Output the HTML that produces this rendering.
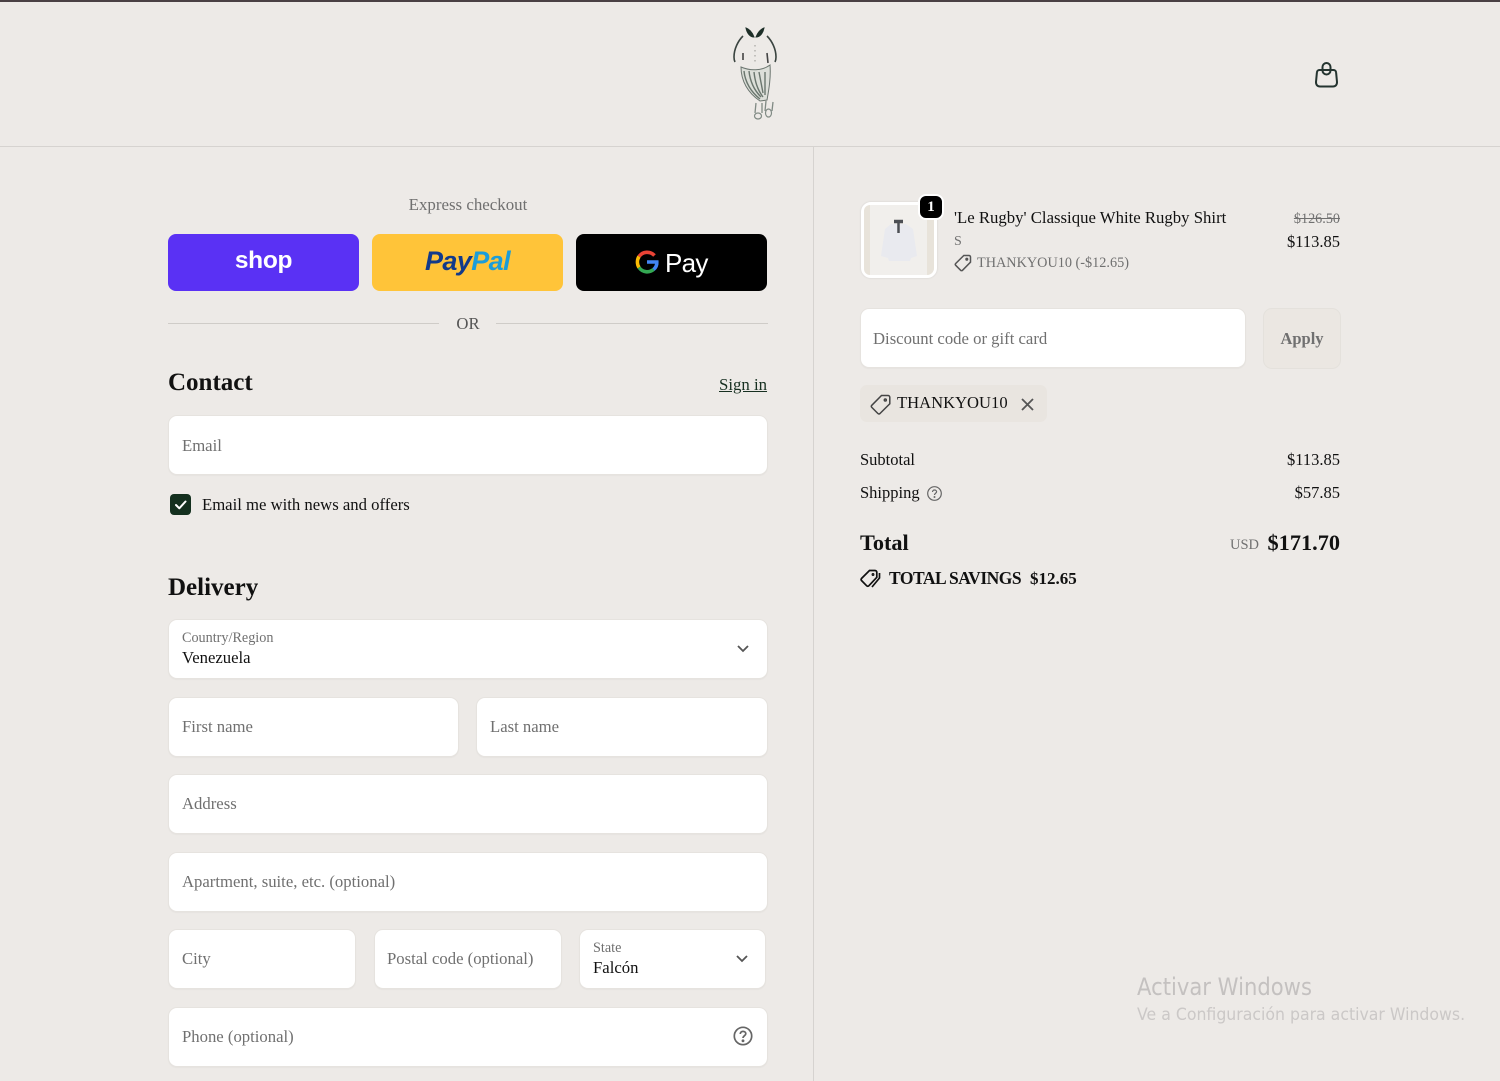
<!DOCTYPE html>
<html><head><meta charset="utf-8"><title>Checkout</title>
<style>
*{box-sizing:border-box}
html,body{margin:0;padding:0;width:1500px;height:1081px;overflow:hidden;background:#edeae7;font-family:"Liberation Serif",serif;color:#111}
.a{position:absolute;white-space:nowrap}
.f{position:absolute;background:#fff;border:1px solid #e6e3df;border-radius:9px;height:60px;box-shadow:0 1px 1px rgba(0,0,0,.03)}
.p{position:absolute;left:13px;top:19px;font-size:16.7px;line-height:20px;color:#707070;white-space:nowrap}
.l{position:absolute;left:13px;top:10px;font-size:14.2px;line-height:17px;color:#707070;white-space:nowrap}
.v{position:absolute;left:13px;top:28px;font-size:16.7px;line-height:20px;color:#111;white-space:nowrap}
.b{position:absolute;top:234px;height:57px;width:191px;border-radius:8px}
svg{position:absolute;overflow:visible}
</style></head><body>
<div class="a" style="left:0;top:0;width:1500px;height:2px;background:#4a4044"></div>
<div class="a" style="left:0;top:146px;width:1500px;height:1px;background:#d6d3d0"></div>
<div class="a" style="left:813px;top:147px;width:1px;height:934px;background:#d6d3d0"></div>

<svg style="left:730px;top:25px" width="50" height="98" viewBox="0 0 50 98" fill="none">
<path d="M16 3C19 4 22 7 24 12C20 12 17 8 16 3ZM34 3C31 4 28 7 26 12C30 12 33 8 34 3Z" fill="#1e2f28" stroke="#1e2f28"/>
<path d="M13 11C8 16 4 24 4 32C4 34 4.500 36 5 37M37 11C42 16 46 24 46 32C46 34 45.500 36 45 37" stroke="#3a4440" stroke-width="1.600"/>
<path d="M13 28L13 35M37 28L38 38" stroke="#444" stroke-width="1.600"/>
<path d="M25 20V40" stroke="#a5a5a0" stroke-width="1.200" stroke-dasharray="1.500 3.500"/>
<path d="M11 42C11 56 18 68 30 76L37 75C39 64 41 52 40 40C32 46 20 46 11 42Z" fill="#dcdfd9" stroke="#6b756f" stroke-width="1"/>
<path d="M14 46C15 57 21 67 30 74M19 46C20 56 24 65 31 72M24 47C25 56 27 64 33 72M29 47L33 68M35 47L35 70" stroke="#6a766e" stroke-width="1.400"/>
<path d="M26 78L25 88M32 78L32 88M36 76L35 86M43 77L42 86" stroke="#808a84" stroke-width="1.300"/>
<ellipse cx="28" cy="91" rx="3.500" ry="3" stroke="#808a84" stroke-width="1.200"/><ellipse cx="38.500" cy="88" rx="3" ry="4" stroke="#808a84" stroke-width="1.200"/>
</svg>

<svg style="left:1314px;top:61px" width="25" height="27" viewBox="0 0 25 27" fill="none" stroke="#243430" stroke-width="2">
<path d="M5.500 9H19.500C21 9 22 10 22.100 11.500L23 21C23.100 23.800 21.500 25.500 19 25.500H6C3.500 25.500 1.900 23.800 2 21L2.900 11.500C3 10 4 9 5.500 9Z"/>
<rect x="8.500" y="2" width="8" height="11.500" rx="4"/>
</svg>

<div class="a" style="left:168px;width:600px;text-align:center;top:195px;font-size:16.9px;line-height:20px;color:#707070">Express checkout</div>
<div class="b" style="left:168px;background:#5a31f4"><div class="a" style="left:0;width:191px;text-align:center;top:10px;font:bold 24.500px/34px 'Liberation Sans',sans-serif;color:#fff;letter-spacing:-.3px">shop</div></div>
<div class="b" style="left:372px;background:#ffc439"><div class="a" style="left:0;width:191px;text-align:center;top:10px;font:italic bold 27px/34px 'Liberation Sans',sans-serif;color:#123a8a;letter-spacing:-.6px">Pay<span style="color:#1b9dd9">Pal</span></div></div>
<div class="b" style="left:576px;background:#000;width:191px">
<svg style="left:59px;top:16px" width="24" height="24" viewBox="0 0 24 24" fill="none" stroke-width="3.600">
<path d="M19.500 5.500A10 10 0 0 0 4 6.500" stroke="#ea4335"/><path d="M4 6.500A10.500 10.500 0 0 0 4 17.500" stroke="#fbbc04"/><path d="M4 17.500A10 10 0 0 0 18.500 19.500" stroke="#34a853"/><path d="M18.500 19.500C21 17.500 22 15 21.800 12H12" stroke="#4285f4"/></svg>
<div class="a" style="left:89px;top:12px;font:26px/34px 'Liberation Sans',sans-serif;color:#fff;letter-spacing:-.7px">Pay</div></div>

<div class="a" style="left:168px;top:323px;width:271px;height:1px;background:#cfccc8"></div>
<div class="a" style="left:496px;top:323px;width:272px;height:1px;background:#cfccc8"></div>
<div class="a" style="left:168px;width:600px;text-align:center;top:314px;font-size:16.7px;line-height:20px;color:#555">OR</div>

<div class="a" style="left:168px;top:368px;font-size:25px;line-height:30px;font-weight:bold">Contact</div>
<div class="a" style="left:719px;top:375px;font-size:16.8px;line-height:20px;color:#173021;text-decoration:underline">Sign in</div>
<div class="f" style="left:168px;top:415px;width:600px"><div class="p" style="top:20px">Email</div></div>
<div class="a" style="left:170px;top:494px;width:21px;height:21px;border-radius:4px;background:#14301f"></div>
<svg style="left:170px;top:494px" width="21" height="21" fill="none" stroke="#fff" stroke-width="2" stroke-linecap="round" stroke-linejoin="round"><path d="M6 11L9.300 14.300L15.500 7.500"/></svg>
<div class="a" style="left:202px;top:495px;font-size:16.7px;line-height:20px">Email me with news and offers</div>

<div class="a" style="left:168px;top:573px;font-size:25px;line-height:30px;font-weight:bold">Delivery</div>
<div class="f" style="left:168px;top:619px;width:600px"><div class="l">Country/Region</div><div class="v">Venezuela</div>
<svg style="left:568px;top:24px" width="12" height="10" fill="none" stroke="#555" stroke-width="1.800"><path d="M1 2L6 7L11 2"/></svg></div>
<div class="f" style="left:168px;top:697px;width:291px"><div class="p">First name</div></div>
<div class="f" style="left:476px;top:697px;width:292px"><div class="p">Last name</div></div>
<div class="f" style="left:168px;top:774px;width:600px"><div class="p">Address</div></div>
<div class="f" style="left:168px;top:852px;width:600px"><div class="p">Apartment, suite, etc. (optional)</div></div>
<div class="f" style="left:168px;top:929px;width:188px"><div class="p">City</div></div>
<div class="f" style="left:373.500px;top:929px;width:188px"><div class="p" style="left:12.500px">Postal code (optional)</div></div>
<div class="f" style="left:579px;top:929px;width:187px"><div class="l">State</div><div class="v">Falcón</div>
<svg style="left:156px;top:24px" width="12" height="10" fill="none" stroke="#555" stroke-width="1.800"><path d="M1 2L6 7L11 2"/></svg></div>
<div class="f" style="left:168px;top:1007px;width:600px"><div class="p">Phone (optional)</div>
<svg style="left:564px;top:18px" width="20" height="20" viewBox="0 0 20 20" fill="none" stroke="#666" stroke-width="1.700"><circle cx="10" cy="10" r="8.700"/><path d="M7.300 8C7.300 6.300 8.500 5.400 10 5.400C11.600 5.400 12.800 6.400 12.800 7.800C12.800 9.600 10 9.800 10 12"/><circle cx="10" cy="14.800" r=".6" fill="#666"/></svg></div>

<!-- summary -->
<div class="a" style="left:861px;top:202px;width:76px;height:76px;border-radius:10px;background:#f1efec;border:3px solid #fff;box-shadow:0 0 2px rgba(0,0,0,.12)"></div>
<div class="a" style="left:864px;top:205px;width:6px;height:70px;background:#e8e3da;border-radius:7px 0 0 7px"></div>
<div class="a" style="left:927px;top:205px;width:7px;height:70px;background:#e8e3da;border-radius:0 7px 7px 0"></div>
<svg style="left:878px;top:218px" width="42" height="46" viewBox="0 0 42 46" fill="none">
<path d="M13 6L28 6L35 11L39 38L33 40L32 43H11L10 40L3 38L7 11Z" fill="#e9eaef"/>
<path d="M16 3.500H25" stroke="#4c4f54" stroke-width="3.500"/><path d="M20.500 4V15" stroke="#4c4f54" stroke-width="2.500"/>
</svg>
<div class="a" style="left:918px;top:194px;width:26px;height:26px;border-radius:8px;background:#000;border:2px solid #fff;color:#fff;font:bold 15px/22px 'Liberation Serif',serif;text-align:center">1</div>
<div class="a" style="left:954px;top:208px;font-size:16.75px;line-height:20px">'Le Rugby' Classique White Rugby Shirt</div>
<div class="a" style="left:954px;top:233px;font-size:14px;line-height:18px;color:#707070">S</div>
<svg style="left:954px;top:254px" width="18" height="18" viewBox="0 0 18 18" fill="none" stroke="#555" stroke-width="1.500"><path d="M9.800 1.500H15C15.800 1.500 16.500 2.200 16.500 3V8.200L8.500 16.300C8 16.800 7.200 16.800 6.700 16.300L1.700 11.300C1.200 10.800 1.200 10 1.700 9.500Z"/><circle cx="12.800" cy="5.200" r=".8"/></svg>
<div class="a" style="left:977px;top:254px;font-size:14.25px;line-height:18px;color:#707070">THANKYOU10 (-$12.65)</div>
<div class="a" style="right:160px;top:210px;font-size:14.2px;line-height:18px;color:#707070;text-decoration:line-through">$126.50</div>
<div class="a" style="right:160px;top:232px;font-size:16.5px;line-height:20px">$113.85</div>

<div class="f" style="left:860px;top:308px;width:386px"><div class="p" style="top:20px;left:12px">Discount code or gift card</div></div>
<div class="a" style="left:1263px;top:308px;width:78px;height:61px;border-radius:9px;background:#ebe7e2;border:1px solid #e4e1dc;color:#707070;font-weight:bold;font-size:16.5px;line-height:59px;text-align:center">Apply</div>
<div class="a" style="left:860px;top:385px;width:187px;height:37px;border-radius:7px;background:#e9e5e0"></div>
<svg style="left:870px;top:394px" width="21" height="21" viewBox="0 0 21 21" fill="none" stroke="#444" stroke-width="1.500"><path d="M11.500 1.500H18C19 1.500 19.800 2.300 19.800 3.300V9.800L10 19.500C9.300 20.100 8.500 20.100 7.900 19.500L1.800 13.400C1.200 12.800 1.200 12 1.800 11.300Z"/><circle cx="15.300" cy="6" r="1"/></svg>
<div class="a" style="left:897px;top:393px;font-size:16.6px;line-height:20px">THANKYOU10</div>
<svg style="left:1021px;top:398px" width="13" height="13" fill="none" stroke="#555" stroke-width="1.800"><path d="M1 1L12 12M12 1L1 12"/></svg>

<div class="a" style="left:860px;top:450px;font-size:16.5px;line-height:20px">Subtotal</div>
<div class="a" style="right:160px;top:450px;font-size:16.5px;line-height:20px">$113.85</div>
<div class="a" style="left:860px;top:483px;font-size:16.5px;line-height:20px">Shipping</div>
<svg style="left:927px;top:486px" width="15" height="15" viewBox="0 0 15 15" fill="none" stroke="#666" stroke-width="1.200"><circle cx="7.500" cy="7.500" r="6.800"/><path d="M5.500 6C5.500 4.700 6.400 4 7.500 4C8.700 4 9.600 4.800 9.600 5.800C9.600 7.200 7.500 7.300 7.500 9"/><circle cx="7.500" cy="11" r=".4" fill="#666"/></svg>
<div class="a" style="right:160px;top:483px;font-size:16.5px;line-height:20px">$57.85</div>
<div class="a" style="left:860px;top:529px;font-size:22.3px;line-height:28px;font-weight:bold">Total</div>
<div class="a" style="left:1230px;top:536px;font-size:14.5px;line-height:18px;color:#707070">USD</div>
<div class="a" style="right:160px;top:529px;font-size:22.3px;line-height:28px;font-weight:bold">$171.70</div>
<svg style="left:860px;top:569px" width="21" height="20" viewBox="0 0 21 20" fill="none" stroke="#111" stroke-width="1.700"><path d="M9.500 1.500H15C16 1.500 16.800 2.300 16.800 3.300V8.300L8.800 16.800C8.200 17.400 7.300 17.400 6.700 16.800L1.500 11.500C1 10.900 1 10.100 1.500 9.500Z"/><path d="M19.500 4V9L12 18"/><circle cx="13" cy="5.500" r=".6"/></svg>
<div class="a" style="left:889px;top:568px;font-size:17.5px;line-height:20px;font-weight:bold;letter-spacing:-.5px">TOTAL SAVINGS</div>
<div class="a" style="left:1030px;top:569px;font-size:17px;line-height:20px;font-weight:bold">$12.65</div>

<div class="a" style="left:1137px;top:972px;font:24px/30px 'DejaVu Sans',sans-serif;color:#c4c1c0;transform-origin:0 0;transform:scaleX(.88)">Activar Windows</div>
<div class="a" style="left:1137px;top:1004px;font:16.5px/21px 'DejaVu Sans',sans-serif;color:#cbc8c7;transform-origin:0 0;transform:scaleX(.953)">Ve a Configuración para activar Windows.</div>
</body></html>
